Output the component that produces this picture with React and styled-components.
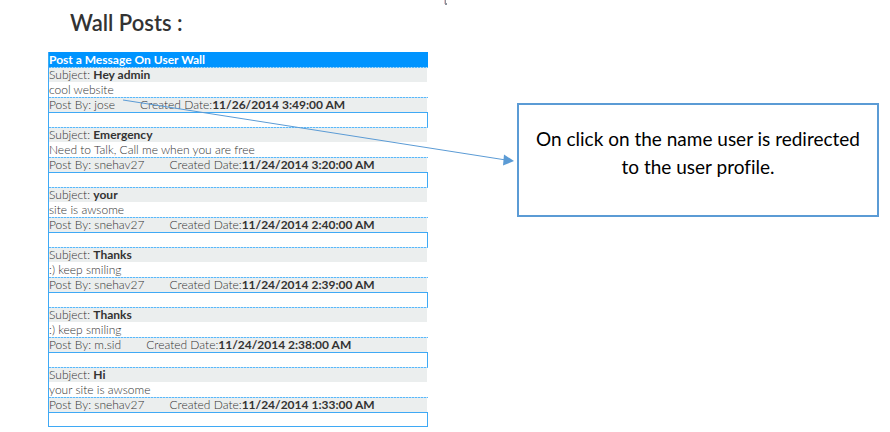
import React from "react";
import styled, { createGlobalStyle } from "styled-components";

const GlobalStyle = createGlobalStyle`
  * { box-sizing: border-box; }
  body {
    margin: 0;
    background: #fff;
    font-family: Lato, "Open Sans", sans-serif;
  }
`;

const Page = styled.main`
  position: relative;
  display: flex;
  align-items: flex-start;
  gap: 89px;
  padding: 0 11px 4px 48px;
`;

const Wall = styled.section`
  flex: 0 1 380px;
`;

const Title = styled.h1`
  margin: 0;
  padding: 9px 22px 15px;
  font-size: 22px;
  line-height: 28px;
  font-weight: 600;
  color: #333;
`;

const Board = styled.div`
  border-left: 1px solid #3fa9f5;
  font-size: 12px;
  font-weight: 300;
  color: #333;
  white-space: nowrap;
`;

const BoardHeader = styled.h2`
  margin: 0;
  padding-top: 1px;
  background: #0094ff;
  color: #fff;
  font-size: 12px;
  line-height: 14px;
  font-weight: 700;
`;

const Post = styled.article``;

const DashedRule = styled.div`
  height: 1px;
  background: repeating-linear-gradient(to right, #59b8fa 0 2px, #b5defa 2px 3px);
`;

const Line = styled.div`
  margin-right: 1px;
  height: ${(p) => (p.$tall ? 15 : 14)}px;
  line-height: ${(p) => (p.$tall ? 15 : 14)}px;
  background: ${(p) => (p.$shaded ? "#ebeeee" : "#fff")};
`;

const Meta = styled(Line)`
  display: flex;
  gap: 25px;
`;

const Strong = styled.strong`
  font-weight: 700;
  color: #333;
`;

const Author = styled.a`
  color: inherit;
  text-decoration: none;
`;

const Spacer = styled.div`
  height: 15px;
  border: 1px solid #3fa9f5;
  border-width: 1px 1px 0 0;

  ${Post}:last-child & {
    border-bottom-width: 1px;
  }
`;

const Callout = styled.aside`
  flex: 1 1 362px;
  min-height: 114px;
  margin-top: 103px;
  padding: 20px 16px;
  border: 2px solid #5b9bd5;
  background: #fff;
  color: #000;
  font-size: 19px;
  line-height: 28px;
  font-variant-ligatures: none;
  text-align: center;
`;

const Arrow = styled.svg`
  position: absolute;
  left: 122px;
  top: 98px;
  pointer-events: none;
`;

const CursorTip = styled.svg`
  position: absolute;
  left: 444px;
  top: 0;
`;

const posts = [
  { subject: "Hey admin", message: "cool website", author: "jose", date: "11/26/2014 3:49:00 AM" },
  { subject: "Emergency", message: "Need to Talk, Call me when you are free", author: "snehav27", date: "11/24/2014 3:20:00 AM" },
  { subject: "your", message: "site is awsome", author: "snehav27", date: "11/24/2014 2:40:00 AM" },
  { subject: "Thanks", message: ":) keep smiling", author: "snehav27", date: "11/24/2014 2:39:00 AM" },
  { subject: "Thanks", message: ":) keep smiling", author: "m.sid", date: "11/24/2014 2:38:00 AM" },
  { subject: "Hi", message: "your site is awsome", author: "snehav27", date: "11/24/2014 1:33:00 AM" },
];

export default function App() {
  return (
    <>
      <GlobalStyle />
      <Page>
        <Wall>
          <Title>Wall Posts :</Title>
          <Board>
            <BoardHeader>Post a Message On User Wall</BoardHeader>
            <div>
              {posts.map((post) => (
                <Post key={post.date}>
                  <DashedRule />
                  <Line $shaded>
                    Subject: <Strong>{post.subject}</Strong>
                  </Line>
                  <Line $tall>{post.message}</Line>
                  <DashedRule />
                  <Meta $shaded>
                    <span>
                      Post By: <Author href="#profile">{post.author}</Author>
                    </span>
                    <span>
                      Created Date:<Strong>{post.date}</Strong>
                    </span>
                  </Meta>
                  <Spacer />
                </Post>
              ))}
            </div>
          </Board>
        </Wall>
        <Callout>On click on the name user is redirected to the user profile.</Callout>
        <Arrow width="394" height="70" viewBox="0 0 394 70" aria-hidden="true">
          <path d="M1 2L384 62" stroke="#5b9bd5" strokeWidth="1" fill="none" />
          <path d="M382 56.500L392 63L381 67.500Z" fill="#5b9bd5" />
        </Arrow>
        <CursorTip width="4" height="5" viewBox="0 0 4 5" aria-hidden="true">
          <path d="M0 0H1V4H0Z" fill="#e5c5c5" />
          <path d="M1 0H2V4H1ZM1 3H3V5H1Z" fill="#8d929c" />
        </CursorTip>
      </Page>
    </>
  );
}
